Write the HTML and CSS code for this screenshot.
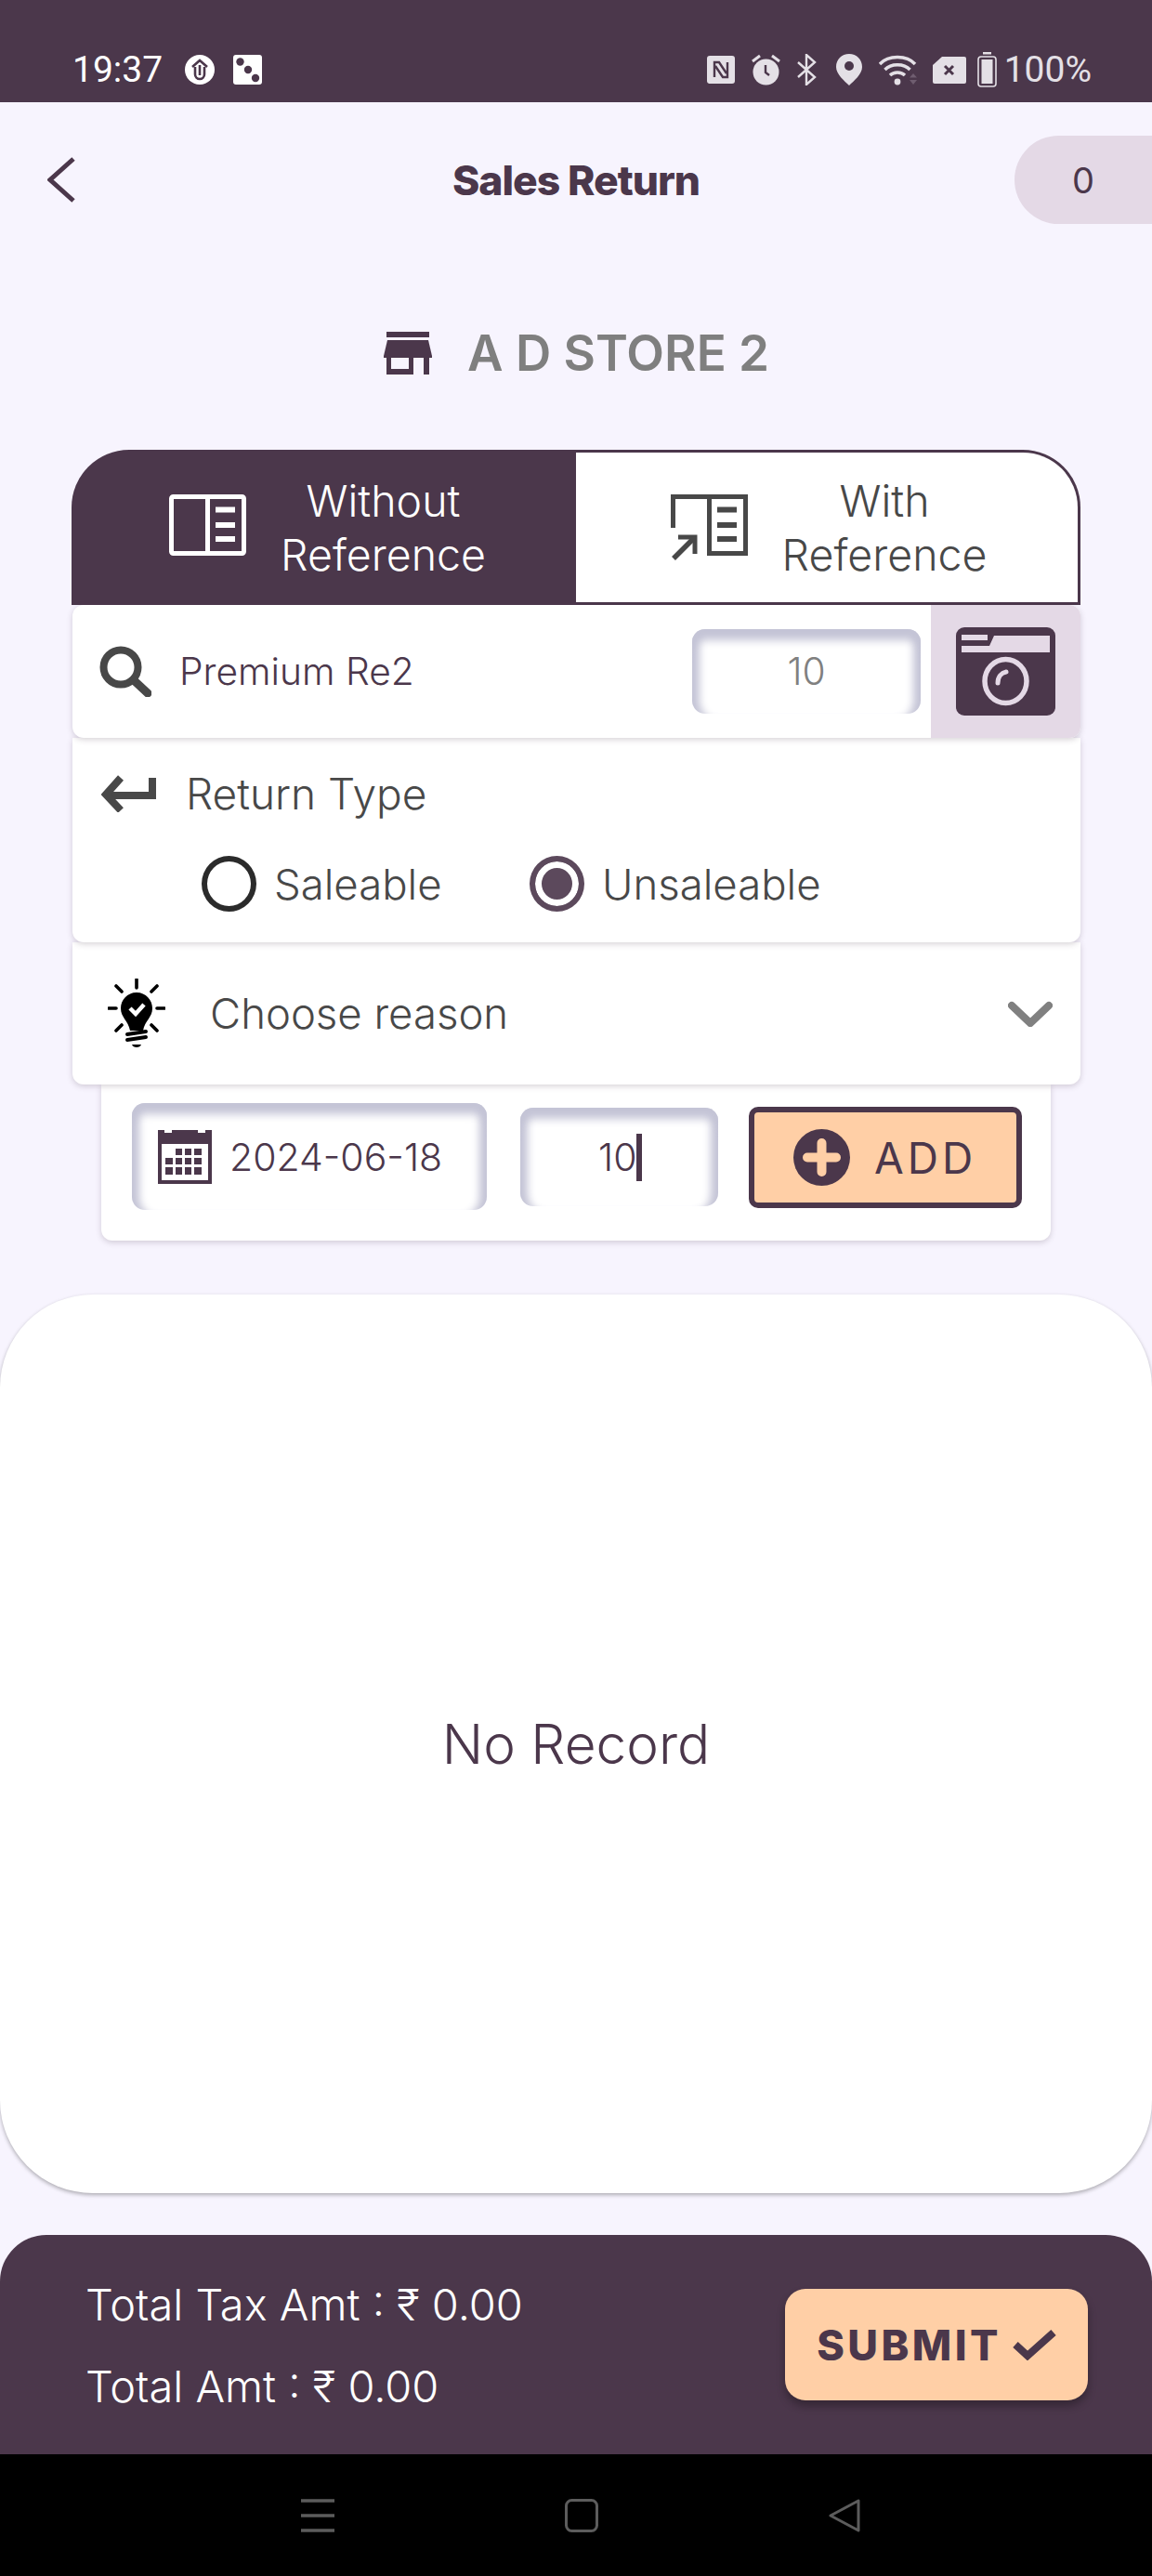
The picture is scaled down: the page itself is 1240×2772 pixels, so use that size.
FILE: index.html
```html
<!DOCTYPE html>
<html lang="en">
<head>
  <meta charset="UTF-8">
  <meta name="viewport" content="width=device-width, initial-scale=1.0">
  <title>Sales Return</title>
  <link rel="stylesheet" href="styles.css">
</head>
<body>
  <div class="status-bar">
    <div class="status-left">
      <span class="status-time">19:37</span>
      <svg class="st-upload" viewBox="0 0 32 32">
        <circle cx="16" cy="16" r="16" fill="#fff"/>
        <path d="M8 13 16 6l8 7" fill="none" stroke="#4b374b" stroke-width="2.6"/>
        <path d="M11 13v8a5 5 0 0 0 10 0v-8" fill="none" stroke="#4b374b" stroke-width="2.6"/>
        <path d="M16 11v11" stroke="#4b374b" stroke-width="2.6"/>
      </svg>
      <svg class="st-dice" viewBox="0 0 31 32">
        <rect width="31" height="32" rx="3" fill="#fff"/>
        <circle cx="7.5" cy="7.5" r="4.2" fill="#4b374b"/>
        <circle cx="16" cy="16" r="4.2" fill="#4b374b"/>
        <circle cx="24" cy="25" r="4.2" fill="#4b374b"/>
      </svg>
    </div>
    <div class="status-right">
      <svg class="st-nfc" viewBox="0 0 30 30">
        <rect width="30" height="30" rx="3" fill="#e4e0e6"/>
        <path d="M8 23V7h5l8 12M22 7v16h-5L9 11" fill="none" stroke="#4b374b" stroke-width="2.4"/>
      </svg>
      <svg class="st-alarm" viewBox="0 0 31 34">
        <circle cx="15.5" cy="19.5" r="14" fill="#e4e0e6"/>
        <path d="M1 8 9 2M30 8 22 2" stroke="#e4e0e6" stroke-width="3"/>
        <path d="M15 12v8l4 3" fill="none" stroke="#4b374b" stroke-width="2.4"/>
      </svg>
      <svg class="st-bt" viewBox="0 0 21 34">
        <path d="M1 9 19 25 10 33V1l9 8L1 25" fill="none" stroke="#e4e0e6" stroke-width="2.4"/>
      </svg>
      <svg class="st-pin" viewBox="0 0 28 34">
        <path d="M14 0C6 0 0 6 0 14c0 8 9 15 14 20 5-5 14-12 14-20C28 6 22 0 14 0Z" fill="#e4e0e6"/>
        <circle cx="14" cy="13" r="5" fill="#4b374b"/>
      </svg>
      <svg class="st-wifi" viewBox="0 0 41 34">
        <path d="M1 11C10 1 30 1 39 11" fill="none" stroke="#e4e0e6" stroke-width="3.4"/>
        <path d="M6.500 17C13 10 27 10 33.500 17" fill="none" stroke="#e4e0e6" stroke-width="3.400"/>
        <path d="M12 23c4-4 12-4 16 0" fill="none" stroke="#e4e0e6" stroke-width="3.400"/>
        <circle cx="20" cy="30" r="3.400" fill="#e4e0e6"/>
        <path d="M33 25.500 37 21l4 4.500ZM33 28h8l-4 5Z" fill="#6f5d70"/>
      </svg>
      <svg class="st-sim" viewBox="0 0 36 29">
        <path d="M10 0h24a2 2 0 0 1 2 2v25a2 2 0 0 1-2 2H2a2 2 0 0 1-2-2V9Z" fill="#e4e0e6"/>
        <path d="M13 10l9 9M22 10l-9 9" stroke="#4b374b" stroke-width="3"/>
      </svg>
      <svg class="st-battery" viewBox="0 0 21 38">
        <rect x="6" y="0" width="9" height="2.500" fill="#e4e0e6"/>
        <rect x="1" y="5" width="19" height="32" rx="3" fill="none" stroke="#e4e0e6" stroke-width="1.600"/>
        <rect x="4.500" y="8" width="12" height="26" fill="#e4e0e6"/>
      </svg>
      <span class="status-pct">100%</span>
    </div>
  </div>

  <div class="top-bar">
    <svg class="back-icon" viewBox="0 0 30 49">
      <path d="M28 2 3 24.500 28 47" fill="none" stroke="#4b374b" stroke-width="5"/>
    </svg>
    <h1 class="page-title">Sales Return</h1>
    <div class="count-badge">0</div>
  </div>

  <div class="store-row">
    <svg class="store-icon" viewBox="0 0 52 46">
      <rect x="3" y="0" width="46" height="6" fill="#4b374b"/>
      <path d="M4 9h44l4 17v2H0v-2Z" fill="#4b374b"/>
      <rect x="3" y="28" width="5" height="18" fill="#4b374b"/>
      <rect x="27" y="28" width="5" height="18" fill="#4b374b"/>
      <rect x="43" y="28" width="6" height="18" fill="#4b374b"/>
      <rect x="3" y="40" width="29" height="6" fill="#4b374b"/>
    </svg>
    <span class="store-name">A D STORE 2</span>
  </div>

  <div class="tabs">
    <div class="tab tab-active">
      <svg class="tab-icon" viewBox="0 0 83 71">
        <rect x="2.500" y="2.500" width="78" height="61" rx="2" fill="none" stroke="currentColor" stroke-width="5"/>
        <path d="M41.500 3v60" stroke="currentColor" stroke-width="5"/>
        <path d="M50 16.500h21M50 33h21M50 48h21" stroke="currentColor" stroke-width="6"/>
      </svg>
      <span class="tab-label">Without<br>Reference</span>
    </div>
    <div class="tab tab-idle">
      <svg class="tab-icon" viewBox="0 0 83 71">
        <path d="M2.500 36V2.500h78v61H41.500V3" fill="none" stroke="currentColor" stroke-width="5"/>
        <path d="M50 16.500h21M50 33h21M50 48h21" stroke="currentColor" stroke-width="6"/>
        <path d="M3 69 24 48" stroke="currentColor" stroke-width="5.500"/>
        <path d="M8 46h18v18" fill="none" stroke="currentColor" stroke-width="5"/>
      </svg>
      <span class="tab-label">With<br>Reference</span>
    </div>
  </div>

  <div class="card search-row">
    <svg class="search-icon" viewBox="0 0 56 55">
      <circle cx="23" cy="23" r="18.500" fill="none" stroke="#484848" stroke-width="8"/>
      <path d="M37 37l15 14" stroke="#484848" stroke-width="9" stroke-linecap="round"/>
    </svg>
    <span class="search-text">Premium Re2</span>
    <div class="inset-box stock-box">10</div>
    <div class="camera-btn">
      <svg class="camera-icon" viewBox="0 0 107 95">
        <rect width="107" height="95" rx="9" fill="#4b374b"/>
        <path d="M6 8h28v6H6ZM6 27V20h30l5-11h60v6V27Z" fill="#e4d9e6"/>
        <ellipse cx="53.500" cy="58" rx="22.500" ry="23.500" fill="none" stroke="#e4d9e6" stroke-width="5.500"/>
        <path d="M45 60c0-7 4-11 9-12" fill="none" stroke="#e4d9e6" stroke-width="5" stroke-linecap="round"/>
      </svg>
    </div>
  </div>

  <div class="card return-box">
    <div class="return-head">
      <svg class="return-icon" viewBox="0 0 59 40">
        <path d="M55 3v19H8" fill="none" stroke="#484848" stroke-width="8"/>
        <path d="M21 3 5 21l16 17" fill="none" stroke="#484848" stroke-width="8"/>
      </svg>
      <span>Return Type</span>
    </div>
    <div class="radio-row">
      <span class="radio"></span>
      <span class="radio-text">Saleable</span>
      <span class="radio radio-on"></span>
      <span>Unsaleable</span>
    </div>
  </div>

  <div class="card reason-row">
    <svg class="bulb-icon" viewBox="0 0 62 75">
      <path d="M31 1v9M9 8l6 6M53 8l-6 6M1 32h8M53 32h8M9 56l6-6M53 56l-6-6" stroke="#000" stroke-width="3.600" stroke-linecap="round"/>
      <path d="M31 15c-10 0-17 8-17 17 0 10 8 13 10 24h14c2-11 10-14 10-24 0-9-7-17-17-17Z" fill="#000"/>
      <path d="M24 32l6 6 9-10" fill="none" stroke="#fff" stroke-width="4.500"/>
      <path d="M21 60l20-3M21 66l20-3" stroke="#000" stroke-width="4" stroke-linecap="round"/>
      <path d="M26 71h10c-1 4-9 4-10 0Z" fill="#000"/>
    </svg>
    <span class="reason-text">Choose reason</span>
    <svg class="chevron-icon" viewBox="0 0 48 28">
      <path d="M4 5l20 19L44 5" fill="none" stroke="#808080" stroke-width="8" stroke-linecap="round" stroke-linejoin="round"/>
    </svg>
  </div>

  <div class="card add-row">
    <div class="inset-box date-box">
      <svg class="cal-icon" viewBox="0 0 58 58">
        <path d="M0 0h7v3h8V0h28v3h8V0h7v58H0Z" fill="#4b374b"/>
        <rect x="4" y="15" width="50" height="39" fill="#fff"/>
        <path d="M19 20h7v7h-7ZM29 20h7v7h-7ZM39 20h8v7h-8ZM8 30h8v7H8ZM19 30h7v7h-7ZM29 30h7v7h-7ZM39 30h8v7h-8ZM8 40h8v8H8ZM19 40h7v8h-7ZM29 40h7v8h-7ZM39 40h8v8h-8Z" fill="#4b374b"/>
      </svg>
      <span>2024-06-18</span>
    </div>
    <div class="inset-box qty-box">10<span class="caret"></span></div>
    <div class="add-btn">
      <svg class="plus-icon" viewBox="0 0 61 61">
        <circle cx="30.500" cy="30.500" r="30.500" fill="#4b374b"/>
        <path d="M30.500 15v31M15 30.500h31" stroke="#ffcfa6" stroke-width="10" stroke-linecap="round"/>
      </svg>
      <span class="add-text">ADD</span>
    </div>
  </div>

  <div class="record-card">No Record</div>

  <div class="footer">
    <div class="totals">
      <div>Total Tax Amt : ₹ 0.00</div>
      <div>Total Amt : ₹ 0.00</div>
    </div>
    <div class="submit-btn">
      <span>SUBMIT</span>
      <svg class="check-icon" viewBox="0 0 47 34">
        <path d="M3 17l13 12L44 4" fill="none" stroke="#4b374b" stroke-width="8"/>
      </svg>
    </div>
  </div>

  <div class="nav-bar">
    <svg class="nav-icon" viewBox="0 0 36 36">
      <path d="M0 2h36M0 18h36M0 34h36" stroke="#5c5c5c" stroke-width="3.500"/>
    </svg>
    <svg class="nav-icon" viewBox="0 0 36 36">
      <rect x="1.500" y="1.500" width="33" height="33" rx="6" fill="none" stroke="#5c5c5c" stroke-width="3"/>
    </svg>
    <svg class="nav-icon" viewBox="0 0 36 36">
      <path d="M33 2v32L3 18Z" fill="none" stroke="#5c5c5c" stroke-width="3" stroke-linejoin="round"/>
    </svg>
  </div>
</body>
</html>
```

FILE: styles.css
```css
* {
  box-sizing: border-box;
}

body {
  margin: 0;
  width: 1240px;
  height: 2772px;
  overflow: hidden;
  background-color: #f7f4fe;
  color: #4b374b;
  font-family: Inter, "Noto Sans", sans-serif;
}

svg {
  display: block;
  flex-shrink: 0;
}

/* status bar */
.status-bar {
  height: 110px;
  padding: 40px 65px 0 78px;
  display: flex;
  justify-content: space-between;
  align-items: center;
  background-color: #4b374b;
  font-family: Roboto, sans-serif;
  font-size: 39px;
}

.status-left,
.status-right {
  display: flex;
  align-items: center;
}

.status-time {
  color: #fff;
  margin-right: 24px;
}

.status-pct {
  color: #e4e0e6;
  margin-left: 8px;
}

.st-upload { width: 32px; height: 32px; margin-right: 20px; }
.st-dice { width: 31px; height: 32px; }
.st-nfc { width: 30px; height: 30px; margin-right: 18px; }
.st-alarm { width: 31px; height: 34px; margin-right: 18px; }
.st-bt { width: 21px; height: 34px; margin-right: 21px; }
.st-pin { width: 28px; height: 34px; margin-right: 18px; }
.st-wifi { width: 41px; height: 34px; margin-right: 17px; }
.st-sim { width: 36px; height: 29px; margin-right: 12px; }
.st-battery { width: 21px; height: 38px; }

/* header */
.top-bar {
  height: 131px;
  padding-top: 36px;
  display: grid;
  grid-template-columns: 1fr auto 1fr;
  align-items: center;
}

.back-icon {
  width: 30px;
  height: 49px;
  margin-left: 51px;
}

.page-title {
  margin: 0;
  font-size: 44.5px;
  font-weight: 800;
  letter-spacing: -1px;
}

.count-badge {
  justify-self: end;
  width: 148px;
  height: 95px;
  display: flex;
  align-items: center;
  justify-content: center;
  background-color: #e4d9e6;
  border-radius: 48px 0 0 48px;
  font-size: 38px;
}

.store-row {
  height: 78px;
  margin-top: 100px;
  padding-left: 413px;
  display: flex;
  align-items: center;
  gap: 38px;
}

.store-icon {
  width: 52px;
  height: 46px;
}

.store-name {
  color: #7f7f7f;
  font-size: 53px;
  font-weight: 600;
}

/* tabs */
.tabs {
  height: 167px;
  margin: 65px 77px 0;
  display: grid;
  grid-template-columns: 543px 543px;
}

.tab {
  display: flex;
  align-items: center;
  justify-content: center;
  gap: 37px;
  font-size: 46.5px;
  line-height: 58px;
  font-weight: 300;
  text-align: center;
}

.tab-active {
  padding-left: 8px;
  background-color: #4b374b;
  border-radius: 62px 0 0 0;
  color: #fff;
}

.tab-idle {
  padding-left: 4px;
  background-color: #fff;
  border: 3px solid #4b374b;
  border-left: 0;
  border-radius: 0 62px 0 0;
  color: #484848;
}

.tab-icon {
  width: 83px;
  height: 71px;
}

/* cards */
.card {
  position: relative;
  margin: 0 77px 0 78px;
  background-color: #fff;
  border-radius: 0 0 12px 12px;
  box-shadow: 0 2px 6px rgba(75, 55, 75, 0.22);
}

.inset-box {
  background-color: #fff;
  border-radius: 14px;
  box-shadow: inset 0 20px 10px -8px #c4c4d6, inset 16px 0 8px -8px #c4c4d6, inset -16px 0 8px -8px #c4c4d6;
}

.search-row {
  z-index: 3;
  height: 143px;
  display: flex;
  align-items: center;
  padding-left: 29px;
  font-size: 40.7px;
  font-weight: 300;
  border-radius: 12px;
}

.search-icon {
  width: 56px;
  height: 55px;
}

.search-text {
  margin-left: 30px;
  width: 552px;
}

.stock-box {
  width: 246px;
  height: 91px;
  display: flex;
  align-items: center;
  justify-content: center;
  color: #808080;
}

.camera-btn {
  width: 161px;
  height: 143px;
  margin-left: 11px;
  display: flex;
  align-items: center;
  justify-content: center;
  background-color: #e4d9e6;
  border-radius: 0 12px 12px 0;
}

.camera-icon {
  width: 107px;
  height: 95px;
}

.return-box {
  z-index: 2;
  height: 220px;
  padding: 38px 0 0 31px;
  color: #484848;
  font-weight: 300;
}

.return-head {
  height: 44px;
  display: flex;
  align-items: center;
  gap: 32px;
  font-size: 46px;
}

.return-icon {
  width: 59px;
  height: 40px;
}

.radio-row {
  margin-top: 45px;
  padding-left: 108px;
  display: flex;
  align-items: center;
  font-size: 45.5px;
}

.radio {
  width: 59px;
  height: 60px;
  margin-right: 19px;
  border: 6px solid #2b2b2b;
  border-radius: 50%;
}

.radio-text {
  width: 175px;
}

.radio-on {
  margin-left: 100px;
  border-color: #5c495c;
  background-color: #5c495c;
  box-shadow: inset 0 0 0 7px #fff;
}

.reason-row {
  z-index: 1;
  height: 153px;
  display: flex;
  align-items: center;
  padding: 0 30px 0 38px;
  color: #484848;
  font-size: 45.5px;
  font-weight: 300;
}

.bulb-icon {
  width: 62px;
  height: 75px;
}

.reason-text {
  margin-left: 48px;
  flex: 1;
}

.chevron-icon {
  width: 48px;
  height: 28px;
}

.add-row {
  height: 168px;
  margin: 0 109px;
  padding: 20px 0 0 33px;
  display: flex;
  align-items: flex-start;
  font-size: 41px;
  font-weight: 300;
}

.date-box {
  width: 382px;
  height: 115px;
  padding-left: 28px;
  display: flex;
  align-items: center;
  gap: 19px;
}

.cal-icon {
  width: 58px;
  height: 58px;
}

.qty-box {
  width: 213px;
  height: 106px;
  margin: 5px 0 0 36px;
  padding-left: 84px;
  display: flex;
  align-items: center;
}

.caret {
  width: 6px;
  height: 51px;
  background-color: #4b374b;
}

.add-btn {
  width: 294px;
  height: 109px;
  margin: 4px 0 0 33px;
  padding-left: 42px;
  display: flex;
  align-items: center;
  gap: 26px;
  background-color: #ffcfa6;
  border: 6px solid #4b374b;
  border-radius: 10px;
}

.plus-icon {
  width: 61px;
  height: 61px;
}

.add-text {
  font-size: 46px;
  font-weight: 400;
  letter-spacing: 4px;
}

.record-card {
  height: 967px;
  margin-top: 58px;
  display: flex;
  align-items: center;
  justify-content: center;
  background-color: #fff;
  border-radius: 100px;
  box-shadow: 0 2px 4px rgba(0, 0, 0, 0.3);
  font-size: 58.5px;
  font-weight: 300;
}

/* footer */
.footer {
  height: 236px;
  margin-top: 45px;
  padding: 0 69px 0 92px;
  display: flex;
  justify-content: space-between;
  align-items: center;
  background-color: #4b374b;
  border-radius: 50px 50px 0 0;
  color: #fff;
  font-size: 47px;
  font-weight: 300;
}

.totals {
  display: flex;
  flex-direction: column;
  gap: 31px;
}

.submit-btn {
  width: 326px;
  height: 120px;
  display: flex;
  align-items: center;
  justify-content: center;
  gap: 12px;
  background-color: #ffcfa6;
  border-radius: 22px;
  box-shadow: 0 6px 10px rgba(0, 0, 0, 0.3);
  color: #4b374b;
  font-size: 45px;
  font-weight: 800;
  letter-spacing: 3.4px;
}

.check-icon {
  width: 47px;
  height: 34px;
}

.nav-bar {
  height: 131px;
  padding: 48px 313px 0 324px;
  display: flex;
  justify-content: space-between;
  align-items: flex-start;
  background-color: #000;
}

.nav-icon {
  width: 36px;
  height: 36px;
}
```
